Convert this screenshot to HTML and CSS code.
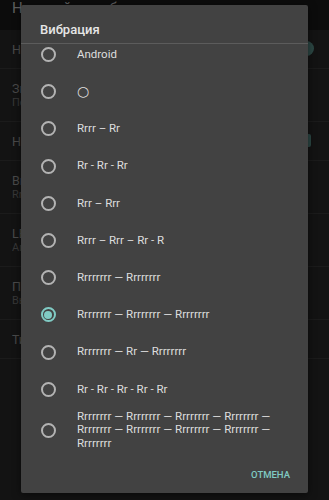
FILE: index.html
```html
<!DOCTYPE html>
<html lang="ru">

<head>
  <meta charset="UTF-8">
  <meta name="viewport" content="width=device-width, initial-scale=1.0">
  <title>Вибрация</title>
  <link rel="stylesheet" href="styles.css">
</head>

<body>
  <div class="screen">
    <div class="app-bar">Настройки вибрации</div>

    <div class="pref pref-single">
      <span class="pref-title">Настраиваемая вибрация</span>
      <span class="switch-thumb"></span>
    </div>
    <div class="pref">
      <span class="pref-title">Звонки</span>
      <span class="pref-summary">По умолчанию</span>
    </div>
    <div class="pref pref-single">
      <span class="pref-title">Настройки уведомлений</span>
      <span class="checkbox"></span>
    </div>
    <div class="pref">
      <span class="pref-title">Вибрация</span>
      <span class="pref-summary">Rrrrrrrr — Rrrrrrrr — Rrrrrrrr</span>
    </div>
    <div class="pref">
      <span class="pref-title">LED</span>
      <span class="pref-summary">Android</span>
    </div>
    <div class="pref">
      <span class="pref-title">Повтор</span>
      <span class="pref-summary">Выкл.</span>
    </div>
    <div class="pref pref-single">
      <span class="pref-title">Тихие часы</span>
    </div>
  </div>

  <div class="dialog">
    <div class="dialog-title">Вибрация</div>
    <div class="dialog-divider"></div>

    <div class="options">
      <div class="options-scroll">
        <div class="option"><span class="radio"></span><span class="label">Android</span></div>
        <div class="option"><span class="radio"></span><span class="label label-glyph">○</span></div>
        <div class="option"><span class="radio"></span><span class="label">Rrrr – Rr</span></div>
        <div class="option"><span class="radio"></span><span class="label">Rr - Rr - Rr</span></div>
        <div class="option"><span class="radio"></span><span class="label">Rrr – Rrr</span></div>
        <div class="option"><span class="radio"></span><span class="label">Rrrr – Rrr – Rr - R</span></div>
        <div class="option"><span class="radio"></span><span class="label">Rrrrrrrr — Rrrrrrrr</span></div>
        <div class="option"><span class="radio checked"></span><span class="label">Rrrrrrrr — Rrrrrrrr — Rrrrrrrr</span></div>
        <div class="option"><span class="radio"></span><span class="label">Rrrrrrrr — Rr — Rrrrrrrr</span></div>
        <div class="option"><span class="radio"></span><span class="label">Rr - Rr - Rr - Rr - Rr</span></div>
        <div class="option"><span class="radio"></span><span class="label">Rrrrrrrr — Rrrrrrrr — Rrrrrrrr — Rrrrrrrr — Rrrrrrrr — Rrrrrrrr — Rrrrrrrr — Rrrrrrrr — Rrrrrrrr</span></div>
      </div>
    </div>

    <div class="dialog-actions">
      <button class="dialog-button">ОТМЕНА</button>
    </div>
  </div>
</body>

</html>
```

FILE: styles.css
```css
body {
  margin: 0;
  background: #131313;
  font-family: Roboto, "Noto Sans", sans-serif;
  height: 500px;
  overflow: hidden;
}

.screen {
  display: flex;
  flex-direction: column;
}

.app-bar {
  height: 30px;
  background: #0c0c0c;
  color: #5e5e5e;
  font-size: 15px;
  line-height: 16px;
  padding: 0 12px;
  white-space: nowrap;
  overflow: hidden;
}

.pref {
  display: flex;
  flex-direction: column;
  justify-content: center;
  position: relative;
  height: 52px;
  padding: 0 12px;
  border-bottom: 1px solid #1b1b1b;
  white-space: nowrap;
}

.pref-single {
  height: 38px;
}

.pref-title {
  color: #4a4a4a;
  font-size: 12.5px;
  line-height: 15px;
}

.pref-summary {
  color: #383838;
  font-size: 11px;
  line-height: 13px;
}

.switch-thumb {
  position: absolute;
  right: 15px;
  top: 11px;
  width: 15px;
  height: 15px;
  border-radius: 50%;
  background: #2c4744;
}

.checkbox {
  position: absolute;
  right: 18px;
  top: 12px;
  width: 12px;
  height: 13px;
  border-radius: 2px;
  background: #2c4744;
}

.dialog {
  position: absolute;
  left: 21px;
  top: 5px;
  width: 287px;
  height: 488px;
  background: #424242;
  border-radius: 2px;
  box-shadow: 0 2px 8px rgba(0, 0, 0, 0.5);
  display: flex;
  flex-direction: column;
}

.dialog-title {
  height: 38px;
  box-sizing: border-box;
  padding: 17px 19px 0;
  color: #e6e6e6;
  font-size: 13px;
  font-weight: 500;
  line-height: 15px;
}

.dialog-divider {
  height: 1px;
  background: #5c5c5c;
}

.options {
  height: 408px;
  overflow: hidden;
}

.options-scroll {
  margin-top: -8px;
}

.option {
  display: flex;
  align-items: center;
  min-height: 37.2px;
  box-sizing: border-box;
  padding: 2px 18px 2px 19.5px;
}

.radio {
  flex: none;
  position: relative;
  width: 15px;
  height: 15px;
  box-sizing: border-box;
  border: 2px solid #b3b3b3;
  border-radius: 50%;
  margin-right: 21.5px;
}

.radio.checked {
  border-color: #80cbc4;
}

.radio.checked::after {
  content: "";
  position: absolute;
  left: 1.5px;
  top: 1.5px;
  width: 8px;
  height: 8px;
  border-radius: 50%;
  background: #80cbc4;
}

.label {
  color: #dedede;
  font-size: 11.5px;
  line-height: 13.5px;
}

.label-glyph {
  font-family: "DejaVu Sans", sans-serif;
  font-size: 14px;
}

.dialog-actions {
  flex: 1;
  display: flex;
  justify-content: flex-end;
  align-items: center;
  padding: 3px 18px 0 0;
}

.dialog-button {
  border: none;
  background: none;
  padding: 0;
  color: #80cbc4;
  font-family: Roboto, "Noto Sans", sans-serif;
  font-size: 9.5px;
  font-weight: 500;
}
```
